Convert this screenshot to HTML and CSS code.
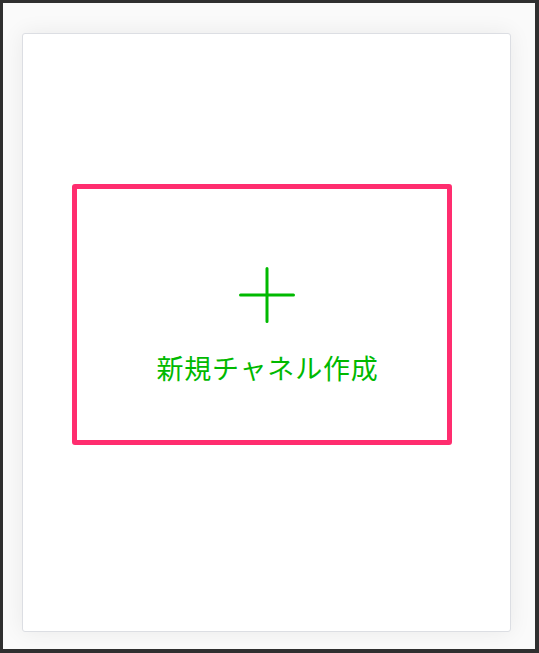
FILE: index.html
```html
<!DOCTYPE html>
<html lang="ja">
<head>
<meta charset="utf-8">
<link rel="stylesheet" href="styles.css">
</head>
<body>
<div class="frame">
  <div class="card">
    <div class="create">
      <svg class="plus" width="56" height="56" viewBox="0 0 56 56">
        <path d="M28 1.5V54.5M1.5 28H54.5" stroke="#00b900" stroke-width="3" stroke-linecap="round" fill="none"/>
      </svg>
      <div class="label">新規チャネル作成</div>
    </div>
    <div class="highlight"></div>
  </div>
</div>
</body>
</html>
```
FILE: styles.css
```css
html, body {
  margin: 0;
  padding: 0;
  background: #2f2f2f;
}
.frame {
  box-sizing: border-box;
  width: 539px;
  height: 653px;
  border-style: solid;
  border-color: #2f2f2f;
  border-width: 3px 4px 4px 3px;
  background: #fafafa;
  padding: 30px 24px 17px 19px;
  display: flex;
}
.card {
  position: relative;
  flex: 1;
  background: #ffffff;
  border: 1px solid #dcdee3;
  border-radius: 3px;
  box-shadow: 0 0 22px rgba(0, 0, 0, 0.07);
  display: flex;
  flex-direction: column;
  align-items: center;
}
.create {
  display: flex;
  flex-direction: column;
  align-items: center;
  padding-top: 233px;
  padding-left: 2px;
}
.plus {
  display: block;
}
.label {
  margin-top: 31px;
  font-family: "Noto Sans CJK JP", "Noto Sans", sans-serif;
  font-size: 27px;
  line-height: 27px;
  color: #00b900;
  letter-spacing: 0.8px;
}
.highlight {
  position: absolute;
  left: 49px;
  top: 150px;
  width: 380px;
  height: 261px;
  box-sizing: border-box;
  border: 5px solid #ff2d6f;
  border-radius: 3px;
}
```
